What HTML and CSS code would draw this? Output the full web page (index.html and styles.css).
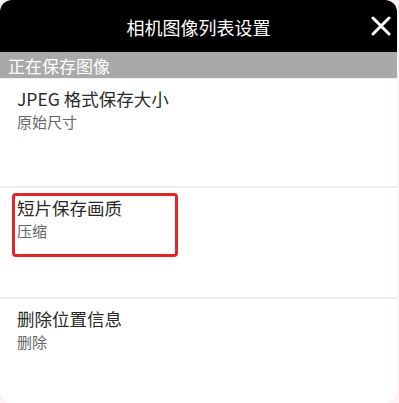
FILE: index.html
```html
<!DOCTYPE html>
<html lang="zh-CN">
<head>
    <meta charset="UTF-8">
    <meta name="viewport" content="width=device-width, initial-scale=1.0">
    <title>相机图像列表设置</title>
    <link rel="stylesheet" href="styles.css">
</head>
<body>
    <div class="panel">
        <div class="header">
            <div class="title">相机图像列表设置</div>
            <button class="close" aria-label="关闭">
                <svg width="20" height="20" viewBox="0 0 20 20">
                    <path d="M2 2 L18 18 M18 2 L2 18" stroke="#fff" stroke-width="3" stroke-linecap="round"/>
                </svg>
            </button>
        </div>
        <div class="section">正在保存图像</div>
        <div class="item">
            <div class="item-title">JPEG 格式保存大小</div>
            <div class="item-value">原始尺寸</div>
        </div>
        <div class="item highlighted">
            <div class="item-title">短片保存画质</div>
            <div class="item-value">压缩</div>
            <div class="mark"></div>
        </div>
        <div class="item last">
            <div class="item-title">删除位置信息</div>
            <div class="item-value">删除</div>
        </div>
    </div>
</body>
</html>
```

FILE: styles.css
```css
* {
    margin: 0;
    padding: 0;
    box-sizing: border-box;
    font-family: "Noto Sans CJK SC", "Noto Sans", sans-serif;
}

body {
    background-color: #fdf3f3;
    width: 399px;
    height: 403px;
    overflow: hidden;
}

.panel {
    width: 397px;
    height: 403px;
    background: #fff;
    border-radius: 12px;
    overflow: hidden;
}

.header {
    height: 52px;
    background: #000;
    display: flex;
    align-items: center;
    justify-content: center;
    position: relative;
}

.title {
    color: #fff;
    font-size: 18px;
    line-height: 24px;
    margin-top: 2px;
}

.close {
    position: absolute;
    right: 6px;
    top: 16px;
    background: none;
    border: none;
    width: 20px;
    height: 20px;
}

.section {
    height: 27px;
    background: #a9a9a9;
    color: #fff;
    font-size: 17px;
    line-height: 27px;
    padding-left: 8px;
    border-bottom: 1px solid #f0f0f0;
}

.item {
    height: 109px;
    padding: 8px 17px 0;
    border-bottom: 2px solid #eeeeee;
    position: relative;
}

.item.highlighted {
    height: 111px;
}

.item.last {
    border-bottom: none;
}

.item-title {
    color: #2a2a2a;
    font-size: 17.5px;
    line-height: 24px;
}

.item-value {
    color: #666;
    font-size: 15px;
    line-height: 22px;
}

.mark {
    position: absolute;
    left: 12px;
    top: 5px;
    width: 166px;
    height: 64px;
    border: 3px solid #e32428;
    border-radius: 4px;
}
```
